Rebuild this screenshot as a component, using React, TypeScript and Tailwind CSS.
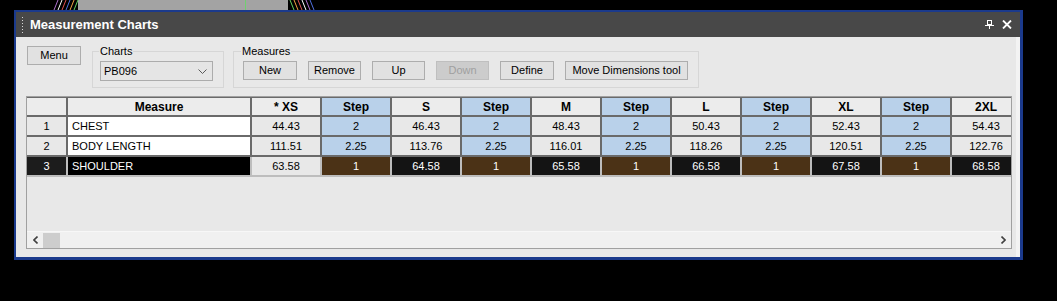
import React from "react";

/* ------------------------------------------------------------------ */
/*  Data                                                               */
/* ------------------------------------------------------------------ */

type Col = { key: string; label: string; step?: boolean };

const COLS: Col[] = [
  { key: "xs", label: "* XS" },
  { key: "s1", label: "Step", step: true },
  { key: "s", label: "S" },
  { key: "s2", label: "Step", step: true },
  { key: "m", label: "M" },
  { key: "s3", label: "Step", step: true },
  { key: "l", label: "L" },
  { key: "s4", label: "Step", step: true },
  { key: "xl", label: "XL" },
  { key: "s5", label: "Step", step: true },
  { key: "xxl", label: "2XL" },
];

const ROWS = [
  { id: 1, name: "CHEST", values: ["44.43", "2", "46.43", "2", "48.43", "2", "50.43", "2", "52.43", "2", "54.43"] },
  { id: 2, name: "BODY LENGTH", values: ["111.51", "2.25", "113.76", "2.25", "116.01", "2.25", "118.26", "2.25", "120.51", "2.25", "122.76"] },
  { id: 3, name: "SHOULDER", values: ["63.58", "1", "64.58", "1", "65.58", "1", "66.58", "1", "67.58", "1", "68.58"], selected: true },
];

const BUTTONS = [
  { label: "New", w: "w-[54px]" },
  { label: "Remove", w: "w-[53px]" },
  { label: "Up", w: "w-[53px]" },
  { label: "Down", w: "w-[53px]", disabled: true },
  { label: "Define", w: "w-[54px]" },
  { label: "Move Dimensions tool", w: "w-[123px]" },
];

/* ------------------------------------------------------------------ */
/*  Bits                                                               */
/* ------------------------------------------------------------------ */

function Backdrop() {
  // the CAD drawing peeking out above the dock window
  return (
    <svg className="absolute left-0 top-0" width="1057" height="12" viewBox="0 0 1057 12">
      <rect x="78" y="0" width="210" height="10" fill="#a3a3a3" />
      <line x1="245.5" y1="0" x2="245.5" y2="10" stroke="#6fd06f" strokeWidth="1" />
      {["#b070d0", "#ffffff", "#e05050", "#5070e0", "#f0a040", "#60d060"].map((c, i) => (
        <line key={"l" + i} x1={54 + i * 4} y1="10" x2={58 + i * 4} y2="0" stroke={c} strokeWidth="1" />
      ))}
      {["#60d060", "#f0a040", "#e05050", "#ffffff", "#b070d0", "#5070e0"].map((c, i) => (
        <line key={"r" + i} x1={290 + i * 4} y1="0" x2={294 + i * 4} y2="10" stroke={c} strokeWidth="1" />
      ))}
    </svg>
  );
}

function Grip() {
  return (
    <div className="flex flex-col gap-[2px] pt-[1px]">
      {Array.from({ length: 6 }).map((_, i) => (
        <div key={i} className="w-[1px] h-[1px] bg-[#d8d8d8]" />
      ))}
    </div>
  );
}

function PinIcon() {
  return (
    <svg width="9" height="9" viewBox="0 0 9 9" fill="none" stroke="white" strokeWidth="1">
      <rect x="2.5" y="0.5" width="4" height="4" />
      <line x1="0" y1="5.5" x2="9" y2="5.5" />
      <line x1="4.5" y1="5.5" x2="4.5" y2="9" />
    </svg>
  );
}

function CloseIcon() {
  return (
    <svg width="10" height="9" viewBox="0 0 10 9" fill="none" stroke="white" strokeWidth="1.8">
      <line x1="1" y1="0.5" x2="9" y2="8.5" />
      <line x1="9" y1="0.5" x2="1" y2="8.5" />
    </svg>
  );
}

function Chevron({ dir }: { dir: "left" | "right" | "down" }) {
  if (dir === "down")
    return (
      <svg width="9" height="5" viewBox="0 0 9 5" fill="none" stroke="#5a5a5a" strokeWidth="1">
        <polyline points="0.5,0.5 4.5,4.5 8.5,0.5" />
      </svg>
    );
  return (
    <svg width="5" height="8" viewBox="0 0 5 8" fill="none" stroke="#404040" strokeWidth="1.6">
      {dir === "left" ? <polyline points="4.5,0.5 1,4 4.5,7.5" /> : <polyline points="0.5,0.5 4,4 0.5,7.5" />}
    </svg>
  );
}

/* ------------------------------------------------------------------ */
/*  Component                                                          */
/* ------------------------------------------------------------------ */

export default function App() {
  const font = "font-['Liberation_Sans',Arial,sans-serif]";

  return (
    <div className={`relative w-[1057px] h-[301px] bg-black overflow-hidden pt-[10px] pl-[14px] ${font}`}>
      <Backdrop />

      {/* Dock window */}
      <div className="relative w-[1009px] h-[250px] border-l-2 border-t-2 border-r-[3px] border-b-[3px] border-[#1b3a8c] flex flex-col">
        {/* Title bar */}
        <div className="h-[25px] bg-[#484848] flex items-center pl-[6px] pr-[8px] shrink-0">
          <Grip />
          <span className="ml-[7px] text-white text-[13px] font-bold leading-none">Measurement Charts</span>
          <div className="ml-auto flex items-center gap-[8px]">
            <PinIcon />
            <CloseIcon />
          </div>
        </div>

        {/* Client area */}
        <div className="flex-1 bg-[#e8e8e8] border-r-4 border-[#f3f3f3] pl-[10px] pr-[4px] flex flex-col">
          {/* Toolbar */}
          <div className="flex items-start pt-[8px] text-[11px] text-black">
            <button className="mt-[1px] ml-[1px] w-[54px] h-[19px] bg-[#e1e1e1] border border-[#adadad] leading-none">
              Menu
            </button>

            <fieldset className="ml-[11px] w-[132px] border border-[#d6d6d6] pl-[7px] pr-[9px] pb-[6px] pt-[3px]">
              <legend className="-ml-[1px] px-[1px] leading-[13px]">Charts</legend>
              <div className="w-[113px] h-[20px] bg-[#e5e5e5] border border-[#acacac] flex items-center pl-[3px] pr-[5px]">
                <span className="leading-none">PB096</span>
                <span className="ml-auto">
                  <Chevron dir="down" />
                </span>
              </div>
            </fieldset>

            <fieldset className="ml-[9px] w-[466px] border border-[#d6d6d6] pl-[9px] pb-[7px] pt-[3px]">
              <legend className="-ml-[2px] px-[1px] leading-[13px]">Measures</legend>
              <div className="flex gap-[11px]">
                {BUTTONS.map((b) => (
                  <button
                    key={b.label}
                    className={`${b.w} h-[19px] border leading-none whitespace-nowrap ${
                      b.disabled ? "bg-[#cccccc] border-[#bfbfbf] text-[#a0a0a0]" : "bg-[#e1e1e1] border-[#adadad]"
                    }`}
                  >
                    {b.label}
                  </button>
                ))}
              </div>
            </fieldset>
          </div>

          {/* Grid */}
          <div className="mt-[8px] w-[986px] h-[153px] border border-[#a0a0a0] flex flex-col text-[11px]">
            <div className="flex-1 overflow-hidden">
              {/* Header */}
              <div className="flex h-[20px] border-t border-[#6a6a6a] font-bold text-[12px]">
                <div className="w-[41px] shrink-0 bg-[#ececec] border-r-2 border-b-2 border-[#6a6a6a]" />
                <div className="w-[184px] shrink-0 bg-[#ececec] border-r-2 border-b-2 border-[#6a6a6a] flex items-center justify-center">
                  Measure
                </div>
                {COLS.map((c) => (
                  <div
                    key={c.key}
                    className={`w-[70px] shrink-0 border-r-2 border-b-2 border-[#6a6a6a] flex items-center justify-center ${
                      c.step ? "bg-[#b9d1ea]" : "bg-[#ececec]"
                    }`}
                  >
                    {c.label}
                  </div>
                ))}
              </div>

              {/* Rows */}
              {ROWS.map((r) => {
                const sel = !!r.selected;
                const line = sel ? "border-[#bdbdbd]" : "border-[#6a6a6a]";
                return (
                  <div key={r.id} className="flex h-[20px]">
                    <div
                      className={`w-[41px] shrink-0 border-r-2 border-b-2 ${line} flex items-center justify-center ${
                        sel ? "bg-[#1c1c1c] text-white" : "bg-[#e8e8e8]"
                      }`}
                    >
                      {r.id}
                    </div>
                    <div
                      className={`w-[184px] shrink-0 border-r-2 border-b-2 ${line} flex items-center pl-[4px] ${
                        sel ? "bg-black text-white" : "bg-white"
                      }`}
                    >
                      {r.name}
                    </div>
                    {r.values.map((v, i) => {
                      const step = COLS[i].step;
                      let cls = step ? "bg-[#b9d1ea]" : "bg-[#e8e8e8]";
                      if (sel && i > 0) cls = step ? "bg-[#4b3216] text-white" : "bg-[#141414] text-white";
                      return (
                        <div
                          key={i}
                          className={`w-[70px] shrink-0 border-r-2 border-b-2 ${line} flex items-center justify-center ${cls}`}
                        >
                          {v}
                        </div>
                      );
                    })}
                  </div>
                );
              })}
            </div>

            {/* Horizontal scrollbar */}
            <div className="h-[17px] bg-[#f0f0f0] border-t border-[#f7f7f7] flex items-center">
              <div className="w-[16px] flex justify-center">
                <Chevron dir="left" />
              </div>
              <div className="w-[17px] h-[15px] bg-[#cdcdcd]" />
              <div className="ml-auto w-[16px] flex justify-center">
                <Chevron dir="right" />
              </div>
            </div>
          </div>
        </div>
      </div>
    </div>
  );
}
